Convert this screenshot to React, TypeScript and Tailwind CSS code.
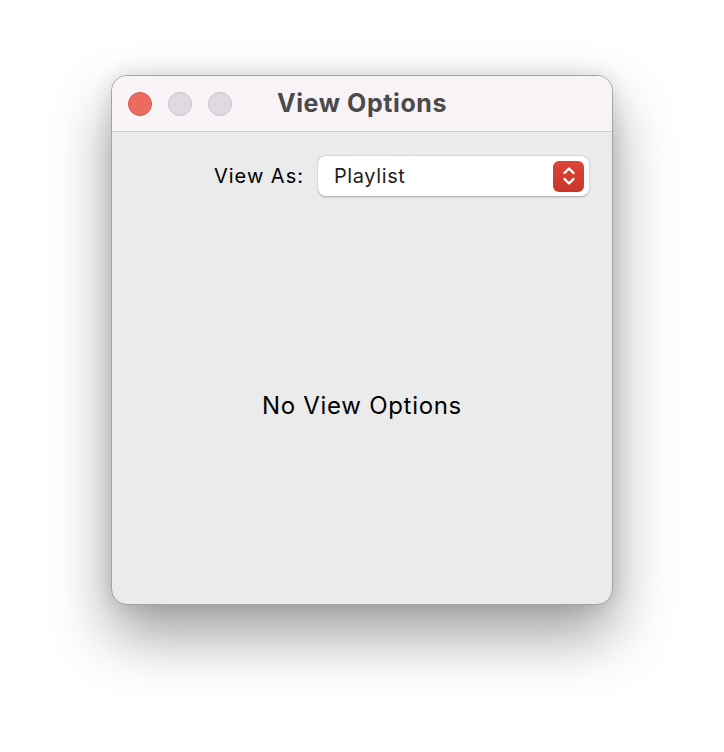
const Light = ({ color, border }: { color: string; border: string }) => (
  <div className={`w-[24px] h-[24px] rounded-full border ${color} ${border}`} />
);

const App = () => {
  return (
    <div
      className="w-[724px] h-[752px] bg-white overflow-hidden"
      style={{ fontFamily: "Inter, 'Noto Sans', sans-serif" }}
    >
      <div className="ml-[111px] mt-[75px] w-[502px] h-[530px] rounded-[16px] border border-[#a3a3a3] bg-[#ebebeb] flex flex-col overflow-hidden shadow-[0_30px_60px_rgba(0,0,0,0.38),0_0_20px_rgba(0,0,0,0.12)]">
        <div className="h-[56px] shrink-0 bg-[#f7f3f7] border-b border-[#cfcccf] flex items-center relative">
          <div className="flex items-center gap-[16px] pl-[16px]">
            <Light color="bg-[#ec6a5e]" border="border-[#d55448]" />
            <Light color="bg-[#dedadf]" border="border-[#c9c5ca]" />
            <Light color="bg-[#dedadf]" border="border-[#c9c5ca]" />
          </div>
          <div className="absolute inset-0 flex items-center justify-center pointer-events-none">
            <span className="text-[25px] font-bold text-[#4a4a4a] tracking-[0.6px]">View Options</span>
          </div>
        </div>

        <div className="flex-1 flex flex-col">
          <div className="flex items-center justify-end pt-[24px] pr-[23px] gap-[14px]">
            <span className="text-[20px] text-black tracking-[1px]">View As:</span>
            <div className="w-[271px] h-[40px] bg-white rounded-[8px] shadow-[0_0.5px_2px_rgba(0,0,0,0.3)] flex items-center justify-between pl-[16px] pr-[5px]">
              <span className="text-[20px] text-[#222] tracking-[0.6px]">Playlist</span>
              <div className="w-[31px] h-[31px] rounded-[6px] bg-gradient-to-b from-[#dc4537] to-[#c9362b] flex items-center justify-center">
                <svg width="14" height="22" viewBox="0 0 14 22" fill="none" stroke="white" strokeWidth="2.4" strokeLinecap="round" strokeLinejoin="round">
                  <path d="M2.5 8 L7 3.5 L11.5 8" />
                  <path d="M2.5 14 L7 18.5 L11.5 14" />
                </svg>
              </div>
            </div>
          </div>
          <div className="flex-1 flex items-center justify-center pt-[12px]">
            <span className="text-[24px] text-black tracking-[0.7px]">No View Options</span>
          </div>
        </div>
      </div>
    </div>
  );
};

export default App;
